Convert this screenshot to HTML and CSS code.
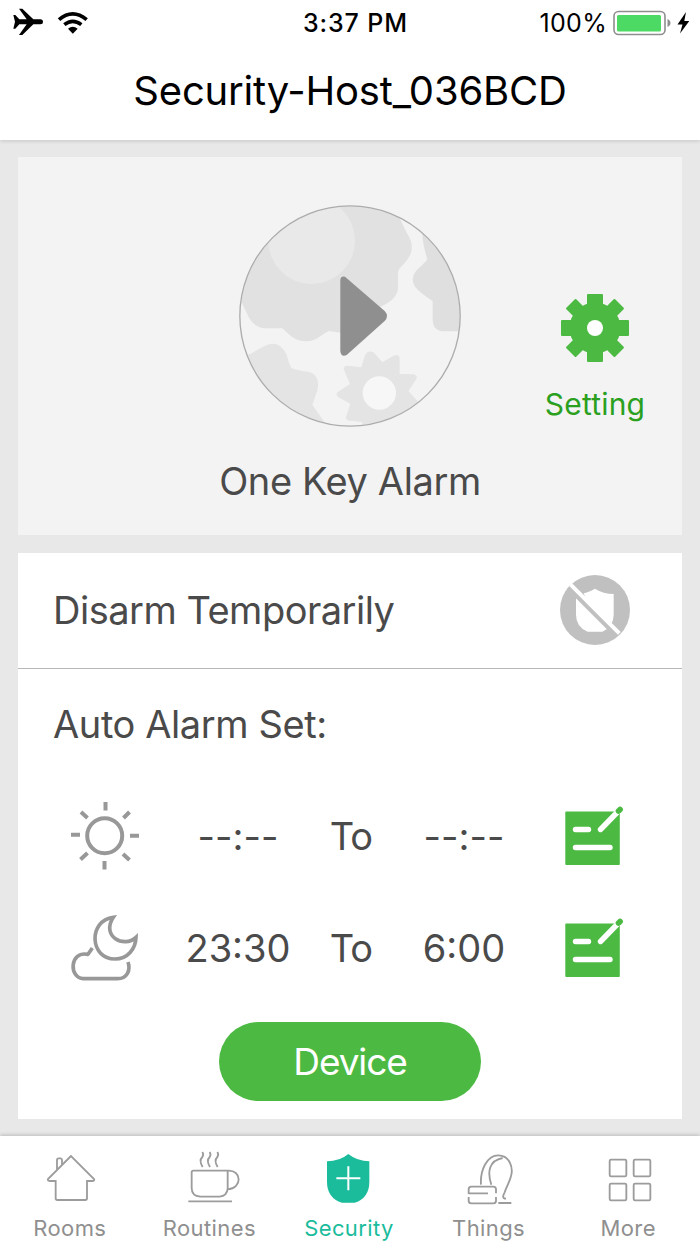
FILE: index.html
```html
<!DOCTYPE html>
<html lang="en">
<head>
    <meta charset="UTF-8">
    <meta name="viewport" content="width=device-width, initial-scale=1.0">
    <title>Security-Host_036BCD</title>
    <link rel="stylesheet" href="styles.css">
</head>
<body>
    <header class="header">
        <div class="status-bar">
            <div class="status-left">
                <svg width="31" height="28" viewBox="36 23 93 84">
                    <path d="M40 44h6l12 13h22L57 25h10l33 32h21q8 0 8 7.500t-8 7.500h-21L67 104H57l23-32H58L46 85h-6l5-20.500z"/>
                </svg>
                <svg class="wifi" width="32" height="23" viewBox="173 31 96 69">
                    <path d="M179 57Q220 22 262 57M195 72q25-20 51 0" fill="none" stroke="#000" stroke-width="11"/>
                    <path d="M206 84q14-11 29 0l-14.500 15z"/>
                </svg>
            </div>
            <div class="time">3:37 PM</div>
            <div class="status-right">
                <span class="percent">100%</span>
                <svg width="78" height="26" viewBox="0 0 78 26">
                    <rect x="1" y="1.500" width="51" height="23" rx="4.500" fill="#fff" stroke="#8e8e8e" stroke-width="1.600"/>
                    <rect x="4" y="5" width="44" height="16.500" rx="1.500" fill="#4cd964"/>
                    <path d="M54.500 9c4 1.500 4 6.500 0 8z" fill="#8e8e8e"/>
                    <path d="M73 2L64.500 14.500h5L67 23.500l9.300-12.500h-5z"/>
                </svg>
            </div>
        </div>
        <h1 class="title">Security-Host_036BCD</h1>
    </header>

    <main class="content">
        <section class="panel alarm">
            <svg class="orb" width="222" height="222" viewBox="27 29 666 666">
                <clipPath id="disc"><circle cx="360" cy="362" r="329"/></clipPath>
                <circle cx="360" cy="362" r="329" fill="#f3f3f3"/>
                <g clip-path="url(#disc)">
                    <path fill="#e1e1e1" d="M20 20h490v50q10 23 22 45q20 31 10 60q-7 18-33 44q-5 5-5 14v42q0 35-48 57L332 412l-35-5q-12 5-24 14q-42 32-88 3l-28-25H105q-32-3-48-32L20 290z"/>
                    <circle cx="245" cy="136" r="130" fill="#e9e9e9"/>
                    <path fill="#dfdfdf" d="M578 100q-5 29 14 92q-5 8-22 23q-34 28-15 59q13 17 53 43v54q0 38 36 37h70V100z"/>
                    <path fill="#e4e4e4" d="M20 490l42-15 42-23q44-21 66 26q10 40 18 42l32 8q54 2 42 58l-15 42 42 60-120 20z"/>
                    <path fill="#e4e4e4" d="M404 482q10-20 28-10l25 29 32-19q17-9 20 7v47l43 1q12 4 7 14l-24 36 33 36-85 67-81 14-6-24-34-4q-20 0-12-17l11-34-37-20q-9-8 0-16l36-23-18-42q-3-13 11-13l41 5z"/>
                </g>
                <circle cx="448" cy="593" r="50" fill="#f7f7f7"/>
                <circle cx="360" cy="362" r="330.500" fill="none" stroke="#acacac" stroke-width="4"/>
                <path fill="#8f8f8f" d="M331 255q0-14 14-11l119 103q14 15 0 30L350 479q-17 8-19-12z"/>
            </svg>
            <div class="alarm-label">One Key Alarm</div>
            <div class="setting">
                <svg width="68" height="68" viewBox="0 0 68 68" fill="#4cba42">
                    <circle cx="34" cy="34" r="25.500"/>
                    <rect x="26" y="0" width="16" height="68" rx="1"/>
                    <rect x="0" y="26" width="68" height="16" rx="1"/>
                    <g transform="rotate(45 34 34)">
                        <rect x="27" y="-.500" width="14" height="69" rx="1"/>
                        <rect x="-.500" y="27" width="69" height="14" rx="1"/>
                    </g>
                    <circle cx="34" cy="34" r="8" fill="#fff"/>
                </svg>
                <span>Setting</span>
            </div>
        </section>

        <section class="panel schedule">
            <div class="disarm">
                <span class="disarm-label">Disarm Temporarily</span>
                <svg width="70" height="70" viewBox="15 15 210 210">
                    <circle cx="120" cy="120" r="105" fill="#c0c0c0"/>
                    <path fill="#fff" d="M120 56q25 16 56 16v62q0 36-34 51H98q-35-14-35-51V72q31 0 57-16z"/>
                    <path d="M40 52l146 146" stroke="#c0c0c0" stroke-width="14"/>
                    <path fill="#c0c0c0" d="M60 65V55l35 6-9 8 9 24z"/>
                    <path d="M47 44l146 146" stroke="#fff" stroke-width="12"/>
                </svg>
            </div>

            <h2 class="auto-title">Auto Alarm Set:</h2>

            <div class="slot">
                <svg class="slot-icon" width="70" height="70" viewBox="0 1 70 70" fill="none" stroke="#989898" stroke-width="4">
                    <circle cx="34.700" cy="35.700" r="17.500"/>
                    <path d="M35.500 2v8.500M34.500 61v8.500M1 34.700h9M60 35.700h9M11 12l6.500 6M53.500 18l6-6M10.500 59.500l7-6.500M53 54l6.500 6"/>
                </svg>
                <span class="from">--:--</span>
                <span class="to">To</span>
                <span class="until">--:--</span>
                <svg class="edit" width="60" height="60" viewBox="0 0 60 60">
                    <rect x="1.300" y="5.500" width="54.500" height="53.500" rx="1" fill="#4cba42"/>
                    <path d="M11.500 23.500h13M11.500 41.500h34.500M36.500 23.500L55 4.500" fill="none" stroke="#fff" stroke-width="5.400" stroke-linecap="round"/>
                    <path d="M54.500 5l1.600-1.600" stroke="#4cba42" stroke-width="5.600" stroke-linecap="round"/>
                </svg>
            </div>
            <div class="slot">
                <svg class="slot-icon" width="70" height="70" viewBox="12 15 210 210" fill="none" stroke="#989898" stroke-width="11">
                    <path d="M142 28C66 37 70 153 147 153c38 0 62-31 63-65C174 122 104 85 142 28z" stroke-linejoin="miter"/>
                    <path d="M79 120l-13 19C8 128 10 212 52 212h103c27 0 40-24 31-50" stroke-linejoin="round"/>
                </svg>
                <span class="from">23:30</span>
                <span class="to">To</span>
                <span class="until">6:00</span>
                <svg class="edit" width="60" height="60" viewBox="0 0 60 60">
                    <rect x="1.300" y="5.500" width="54.500" height="53.500" rx="1" fill="#4cba42"/>
                    <path d="M11.500 23.500h13M11.500 41.500h34.500M36.500 23.500L55 4.500" fill="none" stroke="#fff" stroke-width="5.400" stroke-linecap="round"/>
                    <path d="M54.500 5l1.600-1.600" stroke="#4cba42" stroke-width="5.600" stroke-linecap="round"/>
                </svg>
            </div>

            <button class="device-btn">Device</button>
        </section>
    </main>

    <nav class="tab-bar">
        <div class="tab">
            <svg width="56" height="52" viewBox="123 60 168 156">
                <path d="M210 78L141 147q-2 6 5 6h18v52q0 5 5 5h84q5 0 5-5v-52h17q7-1 4-6zM168 118V90q0-5 5-5h6q4 0 4 5v15"/>
            </svg>
            <span>Rooms</span>
        </div>
        <div class="tab">
            <svg width="56" height="52" viewBox="543 60 168 156">
                <path d="M580 122h103v54q-2 22-24 24h-58q-26-2-26-26v-47q0-5 5-5zM683 122c43-3 45 53 0 56M565 214h131M607 66q5 7 0 15-11 11 1 30M629 66q5 7 0 15-11 11 1 30M652 66q5 7 0 15-11 11 1 30"/>
            </svg>
            <span>Routines</span>
        </div>
        <div class="tab active">
            <svg width="56" height="52" viewBox="123 60 168 156">
                <path class="shield" d="M205 72q27 22 63 22v61q0 49-44 63h-38q-45-14-45-63V94q38 0 64-22z"/>
                <path class="plus" d="M205 109v72M169 145h72"/>
            </svg>
            <span>Security</span>
        </div>
        <div class="tab">
            <svg width="56" height="54" viewBox="543 60 168 162">
                <path d="M566 192v-14q0-8 8-8h66q8 0 8 8v5M566 190h58M566 201v11q0 8 8 8h66q8 0 8-8v-11M648 183v7M603 164c-3-42 17-88 52-88 33 0 47 36 37 66-4 15-12 27-18 45-7 13-6 19 4 19M634 164c-13-39-7-72 34-80M655 219h39"/>
            </svg>
            <span>Things</span>
        </div>
        <div class="tab">
            <svg width="56" height="52" viewBox="180 150 168 156">
                <path d="M213 179h42q4 0 4 4v42q0 4-4 4h-42q-4 0-4-4v-42q0-4 4-4zM285 179h42q4 0 4 4v42q0 4-4 4h-42q-4 0-4-4v-42q0-4 4-4zM213 251h42q4 0 4 4v42q0 4-4 4h-42q-4 0-4-4v-42q0-4 4-4zM285 251h42q4 0 4 4v42q0 4-4 4h-42q-4 0-4-4v-42q0-4 4-4z"/>
            </svg>
            <span>More</span>
        </div>
    </nav>
</body>
</html>
```
FILE: styles.css
```css
* {
    margin: 0;
    padding: 0;
    box-sizing: border-box;
}

body {
    font-family: Inter, "Liberation Sans", sans-serif;
    background: #e8e8e8;
    color: #4a4a4a;
    width: 700px;
    height: 1244px;
    display: flex;
    flex-direction: column;
    overflow: hidden;
}

svg {
    display: block;
    flex-shrink: 0;
}

.header {
    height: 140px;
    background: #fff;
    color: #000;
    box-shadow: 0 1px 4px rgba(0, 0, 0, 0.15);
}

.status-bar {
    height: 44px;
    padding: 2px 9px 0 12px;
    display: grid;
    grid-template-columns: 1fr 120px 1fr;
    align-items: center;
}

.status-left {
    display: flex;
    align-items: center;
    gap: 14px;
    padding-bottom: 2px;
}

.time {
    font-size: 25px;
    font-weight: 500;
    text-align: center;
    white-space: nowrap;
    letter-spacing: 0.9px;
    padding-left: 8px;
}

.status-right {
    display: flex;
    align-items: center;
    justify-content: flex-end;
    gap: 6px;
}

.percent {
    font-size: 25px;
    letter-spacing: 0.3px;
}

.title {
    font-size: 40px;
    font-weight: 400;
    line-height: 94px;
    text-align: center;
    letter-spacing: -0.2px;
}

.content {
    height: 996px;
    padding: 17px 18px;
    display: flex;
    flex-direction: column;
    gap: 18px;
}

.panel {
    background: #fff;
}

.alarm {
    height: 378px;
    padding-top: 48px;
    background: #f3f3f3;
    display: grid;
    grid-template-columns: 1fr 222px 1fr;
    grid-template-rows: 222px 108px;
}

.orb {
    grid-column: 2;
}

.alarm-label {
    grid-column: 1 / 4;
    grid-row: 2;
    font-size: 38px;
    line-height: 108px;
    text-align: center;
    letter-spacing: -0.4px;
}

.setting {
    grid-column: 3;
    grid-row: 1;
    padding-top: 89px;
    margin-left: 84px;
    width: 100px;
    display: flex;
    flex-direction: column;
    align-items: center;
    gap: 22px;
    color: #2ba01f;
    font-size: 30px;
    line-height: 40px;
    letter-spacing: 0.2px;
}

.schedule {
    height: 566px;
    display: flex;
    flex-direction: column;
}

.disarm {
    height: 116px;
    padding: 0 52px 2px 35px;
    border-bottom: 1px solid #b8b8b8;
    display: flex;
    align-items: center;
    justify-content: space-between;
}

.disarm-label,
.auto-title,
.slot {
    font-size: 38px;
    font-weight: 400;
}

.disarm-label {
    letter-spacing: -0.5px;
}

.auto-title {
    height: 111px;
    padding-left: 35px;
    line-height: 111px;
    letter-spacing: -0.4px;
}

.slot {
    height: 112px;
    padding-left: 52px;
    display: grid;
    grid-template-columns: 112px 112px 114px 112px 60px 1fr;
    align-items: center;
    text-align: center;
    line-height: 112px;
}

.slot-icon {
    align-self: center;
}

.to {
    letter-spacing: -1px;
}

.edit {
    margin-left: 44px;
}

.device-btn {
    width: 262px;
    height: 79px;
    margin: 18px auto 0;
    border: none;
    border-radius: 40px;
    background: #4cba42;
    color: #fff;
    font-family: inherit;
    font-size: 37px;
    letter-spacing: -1.1px;
}

.tab-bar {
    height: 108px;
    padding: 14px 2px 0 0;
    background: #fff;
    box-shadow: 0 -1px 4px rgba(0, 0, 0, 0.2);
    display: flex;
    color: #8f8f8f;
}

.tab {
    width: 140px;
    height: 94px;
    display: flex;
    flex-direction: column;
    align-items: center;
    justify-content: space-between;
}

.tab svg {
    fill: none;
    stroke: #9c9c9c;
    stroke-width: 5.5;
    overflow: visible;
}

.tab span {
    font-size: 22px;
    line-height: 32px;
    letter-spacing: 0.4px;
}

.tab.active {
    color: #1abc9c;
}

.tab .shield {
    fill: #1abc9c;
    stroke: none;
}

.tab .plus {
    stroke: #fff;
    stroke-width: 6;
}
```
